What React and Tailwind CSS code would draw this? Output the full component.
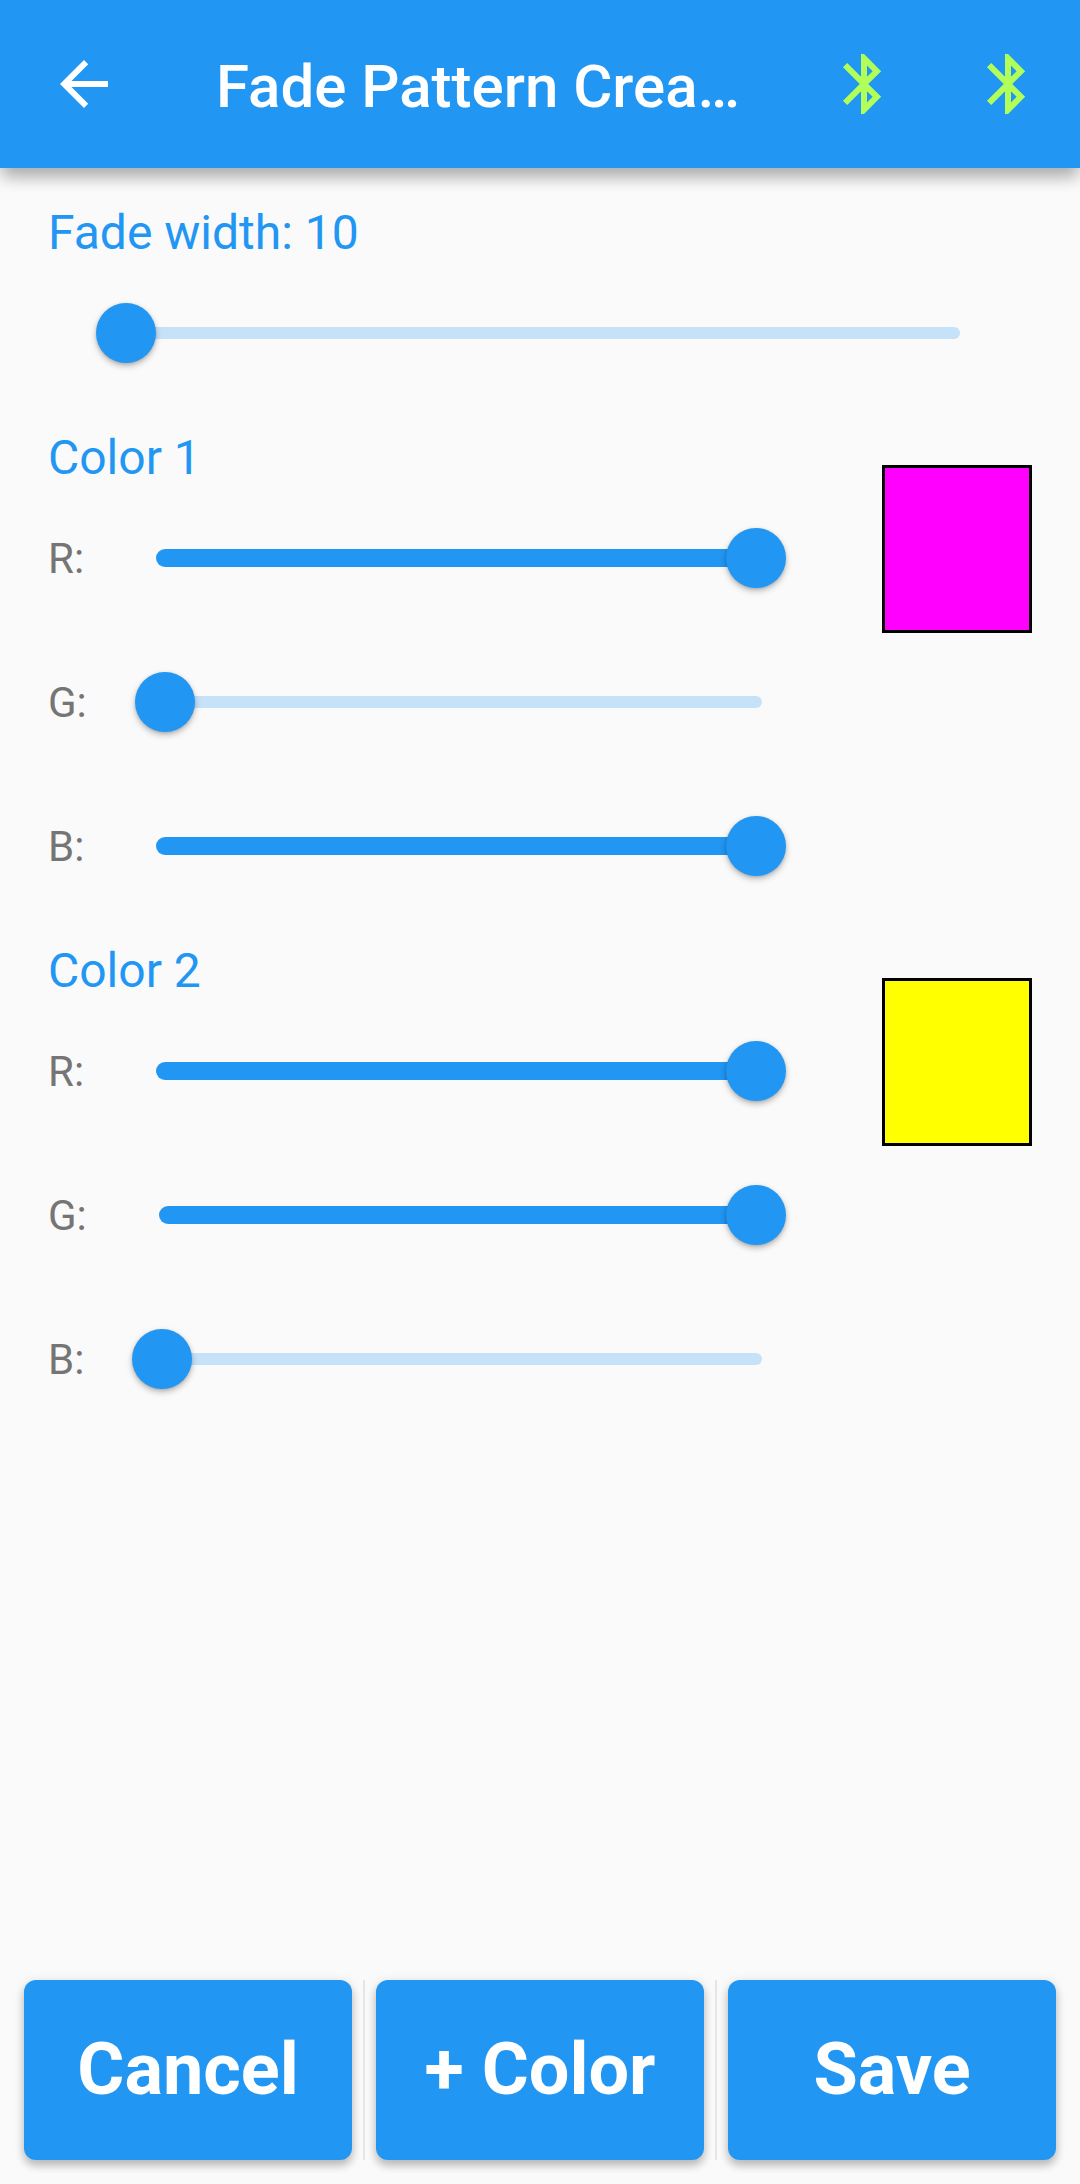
import React from "react";

function BackArrow() {
  return (
    <svg viewBox="0 0 24 24" className="h-[72px] w-[72px] shrink-0 fill-white">
      <path d="M20 11H7.83l5.59-5.59L12 4l-8 8 8 8 1.41-1.41L7.83 13H20v-2z" />
    </svg>
  );
}

function Bluetooth() {
  return (
    <svg viewBox="0 0 24 24" className="h-[72px] w-[72px] shrink-0 fill-[#b2ff59]">
      <path d="M17.71 7.71L12 2h-1v7.59L6.41 5 5 6.41 10.59 12 5 17.59 6.41 19 11 14.41V22h1l5.71-5.71-4.3-4.29 4.3-4.29zM13 5.83l1.88 1.88L13 9.59V5.83zm1.88 10.46L13 18.17v-3.76l1.88 1.88z" />
    </svg>
  );
}

function Slider({ full, className }) {
  return (
    <div className={"relative flex h-[144px] items-center " + className}>
      {full ? (
        <div className="h-[18px] w-full rounded-full bg-[#2196f3]" />
      ) : (
        <div className="h-3 w-full rounded-full bg-[#c6e2f8]" />
      )}
      <div
        className={
          "absolute top-[42px] h-[60px] w-[60px] rounded-full bg-[#2196f3] shadow-[0_3px_6px_rgba(0,0,0,0.26),0_1px_3px_rgba(0,0,0,0.12)] " +
          (full ? "-right-6" : "-left-6")
        }
      />
    </div>
  );
}

function Heading({ children }) {
  return <h2 className="h-[57px] text-[48px] leading-[57px] text-[#2196f3]">{children}</h2>;
}

function Channel({ label, full }) {
  return (
    <div className="flex items-center">
      <span
        className={
          "shrink-0 text-[42px] leading-[49px] text-[#757575] " +
          (label === "G:" ? "w-[111px]" : "w-[108px]")
        }
      >
        {label}
      </span>
      <Slider full={full} className="flex-1" />
    </div>
  );
}

function ColorSection({ title, swatch, channels }) {
  return (
    <section className="mt-6 flex justify-between">
      <div className="w-[714px]">
        <Heading>{title}</Heading>
        {channels.map((c) => (
          <Channel key={c.label} label={c.label} full={c.full} />
        ))}
      </div>
      <div className={"mt-9 h-[168px] w-[150px] border-[3px] border-black " + swatch} />
    </section>
  );
}

function ActionButton({ children }) {
  return (
    <button className="h-[180px] w-[328px] rounded-xl bg-[#2196f3] text-[72px] font-bold text-white shadow-[0_6px_9px_rgba(0,0,0,0.2),0_2px_12px_rgba(0,0,0,0.12)]">
      {children}
    </button>
  );
}

function Divider() {
  return <div className="h-[180px] w-0.5 bg-[#e6e6e6]" />;
}

export default function App() {
  return (
    <div className="flex h-[2184px] w-[1080px] flex-col overflow-hidden bg-[#fafafa] font-['Roboto',sans-serif]">
      <header className="z-10 flex h-[168px] shrink-0 items-center bg-[#2196f3] pl-12 pr-9 shadow-[0_12px_15px_-3px_rgba(0,0,0,0.22),0_6px_18px_rgba(0,0,0,0.15)]">
        <BackArrow />
        <h1 className="ml-24 pt-1.5 text-[60px] leading-[72px] font-medium whitespace-nowrap text-white">
          Fade Pattern Crea…
        </h1>
        <div className="ml-auto flex gap-[72px]">
          <Bluetooth />
          <Bluetooth />
        </div>
      </header>
      <main className="flex-1 px-12 pt-9">
        <Heading>Fade width: 10</Heading>
        <Slider full={false} className="mx-[72px]" />
        <ColorSection
          title="Color 1"
          swatch="bg-[#ff00ff]"
          channels={[
            { label: "R:", full: true },
            { label: "G:", full: false },
            { label: "B:", full: true },
          ]}
        />
        <ColorSection
          title="Color 2"
          swatch="bg-[#ffff00]"
          channels={[
            { label: "R:", full: true },
            { label: "G:", full: true },
            { label: "B:", full: false },
          ]}
        />
      </main>
      <footer className="flex items-center justify-between px-6 pb-6">
        <ActionButton>Cancel</ActionButton>
        <Divider />
        <ActionButton>+ Color</ActionButton>
        <Divider />
        <ActionButton>Save</ActionButton>
      </footer>
    </div>
  );
}
